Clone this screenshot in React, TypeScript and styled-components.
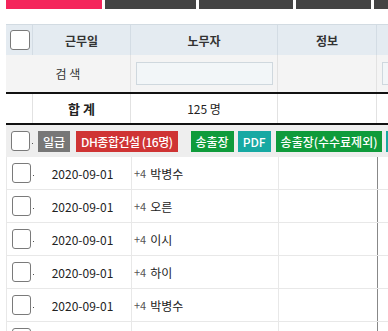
import * as React from 'react'
import styled, { createGlobalStyle } from 'styled-components'

const GlobalStyle = createGlobalStyle`
  body {
    margin: 0;
    background: #fff;
    font-family: "Noto Sans CJK KR", "Noto Sans", sans-serif;
    color: #222;
  }
`

const tabs = [
  { w: 96, active: true },
  { w: 91, active: false },
  { w: 94, active: false },
  { w: 75, active: false },
  { w: 40, active: false }
]

const rows = ['박병수', '오른', '이시', '하이', '박병수', '박병수']

const buttons = [
  { label: '일급', tone: 'gray', gap: 0, ls: 0 },
  { label: 'DH종합건설 (16명)', tone: 'red', gap: 6, ls: -0.5 },
  { label: '송출장', tone: 'green', gap: 13, ls: 0 },
  { label: 'PDF', tone: 'teal', gap: 4, ls: 0 },
  { label: '송출장(수수료제외)', tone: 'green', gap: 5, ls: 0 },
  { label: 'PDF', tone: 'teal', gap: 4, ls: 0 }
]

const tones: Record<string, string> = {
  gray: '#777777',
  red: '#cf3434',
  green: '#0f9b3b',
  teal: '#17a9a3'
}

class App extends React.Component {
  public render() {
    return (
      <Page>
        <GlobalStyle />
        <TabBar>
          {tabs.map((t, i) => (
            <Tab key={i} $w={t.w} $active={t.active} />
          ))}
        </TabBar>
        <Grid>
          <HeadRow>
            <HeadCell $pl={4}>
              <Check />
            </HeadCell>
            <HeadCell>근무일</HeadCell>
            <HeadCell>노무자</HeadCell>
            <HeadCell>정보</HeadCell>
            <HeadCell />
          </HeadRow>
          <SearchRow>
            <SearchLabel>검 색</SearchLabel>
            <SearchCell>
              <SearchInput />
            </SearchCell>
            <SearchCell />
            <SearchCell>
              <SearchInput />
            </SearchCell>
          </SearchRow>
          <SumRow>
            <SumCell />
            <SumCell $bold>합 계</SumCell>
            <SumCell>125 명</SumCell>
            <SumCell />
            <SumCell />
          </SumRow>
          <ActionRow>
            <CheckCell $pl={5}>
              <Check />
              <Dot />
            </CheckCell>
            <ButtonGroup>
              {buttons.map((b, i) => (
                <Action key={i} $bg={tones[b.tone]} $gap={b.gap} $ls={b.ls}>
                  {b.label}
                </Action>
              ))}
            </ButtonGroup>
          </ActionRow>
          {rows.map((name, i) => (
            <DataRow key={i}>
              <CheckCell $pl={5}>
                <Check />
                <Dot />
              </CheckCell>
              <DataCell $center>2020-09-01</DataCell>
              <DataCell>
                <Plus>+4</Plus>
                <Name>{name}</Name>
              </DataCell>
              <DataCell $dark />
              <DataCell />
            </DataRow>
          ))}
        </Grid>
      </Page>
    )
  }
}

const Page = styled.div`
  width: 388px;
  height: 331px;
  overflow: hidden;
`

const TabBar = styled.div`
  display: flex;
  gap: 3px;
  padding-left: 6px;
  height: 9px;
`

const Tab = styled.div<{ $w: number; $active: boolean }>`
  flex: 0 0 ${p => p.$w}px;
  background: ${p => (p.$active ? '#f4255b' : '#444444')};
`

const Grid = styled.div`
  margin: 15px 0 0 6px;
  width: 500px;
`

const Row = styled.div`
  display: grid;
  grid-template-columns: 27px 98px 147px 99px 1fr;
  box-sizing: border-box;
`

const HeadRow = styled(Row)`
  height: 31px;
  background: #e4ebf1;
  border-top: 1px solid #d2dbe2;
`

const HeadCell = styled.div<{ $pl?: number }>`
  display: flex;
  align-items: center;
  justify-content: ${p => (p.$pl ? 'flex-start' : 'center')};
  padding-left: ${p => p.$pl || 0}px;
  border-right: 1px solid #d3dce4;
  font-size: 12px;
  font-weight: 700;
  color: #333;
`

const SearchRow = styled(Row)`
  height: 37px;
  background: #f4f4f4;
`

const SearchLabel = styled.div`
  grid-column: span 2;
  display: flex;
  align-items: center;
  justify-content: center;
  border-right: 1px solid #e2e2e2;
  font-size: 12px;
  color: #333;
`

const SearchCell = styled.div`
  display: flex;
  align-items: center;
  padding: 0 4px 0 5px;
  border-right: 1px solid #e2e2e2;
`

const SearchInput = styled.div`
  box-sizing: border-box;
  width: 100%;
  height: 23px;
  background: #f2f6f8;
  border: 1px solid #cfd8de;
`

const SumRow = styled(Row)`
  height: 33px;
  border-top: 2px solid #111;
  border-bottom: 2px solid #111;
`

const SumCell = styled.div<{ $bold?: boolean }>`
  display: flex;
  align-items: center;
  justify-content: center;
  border-right: 1px solid #e2e2e2;
  font-size: ${p => (p.$bold ? 13 : 12)}px;
  font-weight: ${p => (p.$bold ? 700 : 400)};
  color: #222;
`

const ActionRow = styled(Row)`
  height: 32px;
  background: #eeeeee;
`

const CheckCell = styled.div<{ $pl: number }>`
  display: flex;
  align-items: center;
  padding-left: ${p => p.$pl}px;
`

const Dot = styled.span`
  width: 1px;
  height: 1px;
  margin: 4px 0 0 2px;
  background: #555;
`

const ButtonGroup = styled.div`
  grid-column: span 4;
  display: flex;
  align-items: center;
  padding-left: 5px;
  padding-top: 1px;
  white-space: nowrap;
`

const Action = styled.span<{ $bg: string; $gap: number; $ls: number }>`
  flex: 0 0 auto;
  margin-left: ${p => p.$gap}px;
  height: 21px;
  line-height: 21px;
  padding: 0 5px;
  background: ${p => p.$bg};
  color: #fff;
  font-size: 12px;
  font-weight: 500;
  letter-spacing: ${p => p.$ls}px;
`

const DataRow = styled(Row)`
  height: 33px;
  border-bottom: 1px solid #e8e8e8;
  border-left: 1px solid #e8e8e8;
`

const DataCell = styled.div<{ $center?: boolean; $dark?: boolean }>`
  display: flex;
  align-items: center;
  justify-content: ${p => (p.$center ? 'center' : 'flex-start')};
  padding-left: ${p => (p.$center ? 0 : 2)}px;
  border-right: 1px solid ${p => (p.$dark ? '#888' : '#e8e8e8')};
  font-size: 12px;
  color: #222;
  white-space: nowrap;
`

const Plus = styled.span`
  color: #555;
  font-size: 11px;
`

const Name = styled.span`
  margin-left: 4px;
`

const Check = styled.span`
  box-sizing: border-box;
  width: 20px;
  height: 20px;
  border: 1px solid #7a7a7a;
  border-radius: 3px;
  background: #fff;
`

export default App
